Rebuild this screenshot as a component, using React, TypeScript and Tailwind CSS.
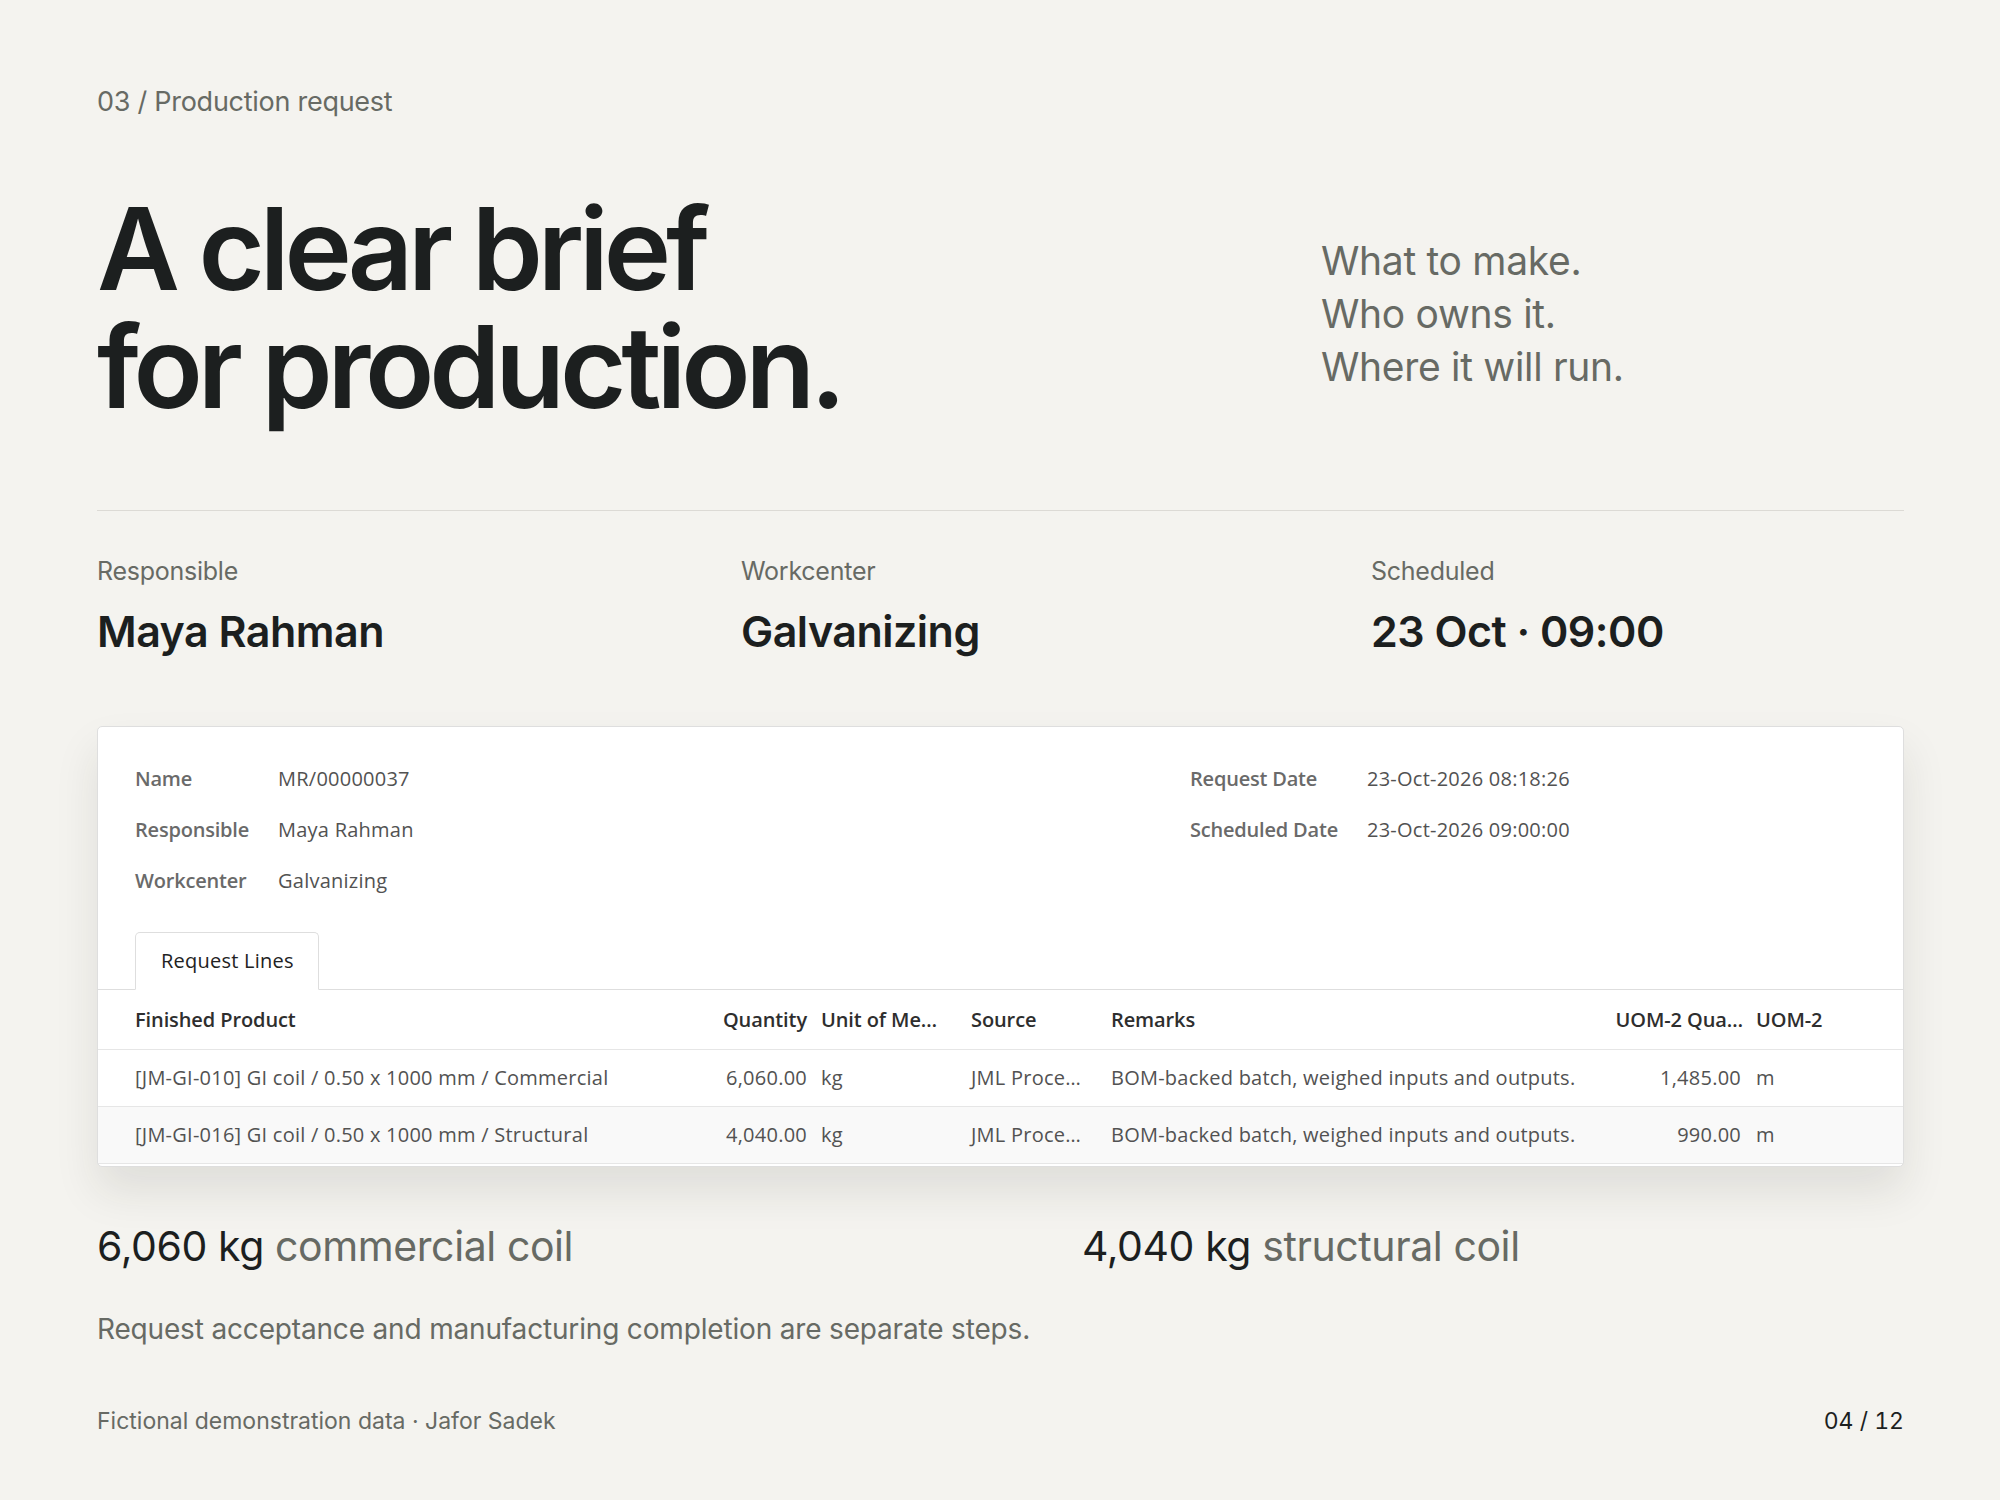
import React from "react";

const fields = [
  { label: "Name", value: "MR/00000037" },
  { label: "Responsible", value: "Maya Rahman" },
  { label: "Workcenter", value: "Galvanizing" },
];

const dates = [
  { label: "Request Date", value: "23-Oct-2026 08:18:26" },
  { label: "Scheduled Date", value: "23-Oct-2026 09:00:00" },
];

const lines = [
  {
    product: "[JM-GI-010] GI coil / 0.50 x 1000 mm / Commercial",
    qty: "6,060.00",
    uom: "kg",
    source: "JML Proce…",
    remarks: "BOM-backed batch, weighed inputs and outputs.",
    qty2: "1,485.00",
    uom2: "m",
  },
  {
    product: "[JM-GI-016] GI coil / 0.50 x 1000 mm / Structural",
    qty: "4,040.00",
    uom: "kg",
    source: "JML Proce…",
    remarks: "BOM-backed batch, weighed inputs and outputs.",
    qty2: "990.00",
    uom2: "m",
  },
];

const cols = "grid grid-cols-[616px_100px_150px_140px_500px_145px_1fr]";

export default function App() {
  return (
    <div className="w-[2000px] h-[1500px] bg-[#f4f3ef] pl-[97px] pr-[96px] pt-[84px] font-['Inter',sans-serif] text-[#1c1f1f]">
      <p className="text-[27px] leading-[36px] text-[#676a64] tracking-[-0.01em]">
        03 / Production request
      </p>

      <div className="mt-[70px] grid grid-cols-[1224px_1fr] items-center">
        <h1 className="text-[114px] leading-[118px] font-semibold tracking-[-0.045em]">
          A clear brief
          <br />
          for production.
        </h1>
        <div className="pt-[10px] text-[39px] leading-[53px] text-[#676a64] tracking-[-0.008em]">
          <p>What to make.</p>
          <p>Who owns it.</p>
          <p>Where it will run.</p>
        </div>
      </div>

      <div className="mt-[84px] border-t border-[#dcdad5]" />

      <div className="mt-[44px] grid grid-cols-[644px_630px_1fr]">
        {[
          ["Responsible", "Maya Rahman"],
          ["Workcenter", "Galvanizing"],
          ["Scheduled", "23 Oct · 09:00"],
        ].map(([label, value]) => (
          <div key={label}>
            <p className="text-[25px] leading-[32px] text-[#676a64] tracking-[-0.01em]">{label}</p>
            <p className="mt-[18px] text-[43px] leading-[52px] font-semibold tracking-[-0.012em]">
              {value}
            </p>
          </div>
        ))}
      </div>

      {/* form card */}
      <div className="mt-[69px] rounded-[5px] border border-[#dedede] bg-white pb-[2px] shadow-[0_24px_44px_rgba(40,35,25,0.10)] font-['Open_Sans',sans-serif] text-[20px] tracking-[0.012em]">
        <div className="grid grid-cols-[1055px_1fr] pl-[37px] pt-[26px]">
          <div>
            {fields.map(f => (
              <div key={f.label} className="flex h-[51px] items-center">
                <span className="w-[143px] font-semibold text-[#6a6a6a] tracking-[-0.01em]">{f.label}</span>
                <span className="text-[#525252]">{f.value}</span>
              </div>
            ))}
          </div>
          <div>
            {dates.map(f => (
              <div key={f.label} className="flex h-[51px] items-center">
                <span className="w-[177px] font-semibold text-[#6a6a6a] tracking-[-0.01em]">{f.label}</span>
                <span className="text-[#525252]">{f.value}</span>
              </div>
            ))}
          </div>
        </div>

        <div className="mt-[26px] flex border-b border-[#dedede] pl-[37px]">
          <div className="-mb-px flex h-[58px] w-[184px] items-center rounded-t-[5px] border border-b-white border-[#dedede] bg-white pl-[25px] text-[#222]">
            Request Lines
          </div>
        </div>

        <div className={`${cols} h-[60px] items-center border-b border-[#e6e6e6] font-semibold text-[#2e2e2e] tracking-[-0.005em]`}>
          <span className="pl-[37px]">Finished Product</span>
          <span className="pr-[7px] text-right">Quantity</span>
          <span className="pl-[7px]">Unit of Me…</span>
          <span className="pl-[7px]">Source</span>
          <span className="pl-[7px]">Remarks</span>
          <span className="pr-[6px] text-right">UOM-2 Qua…</span>
          <span className="pl-[7px]">UOM-2</span>
        </div>

        {lines.map((l, i) => (
          <div
            key={l.product}
            className={`${cols} h-[57px] items-center border-b border-[#e6e6e6] text-[#525252] ${
              i % 2 === 1 ? "bg-[#f9f9f9]" : ""
            }`}
          >
            <span className="pl-[37px]">{l.product}</span>
            <span className="pr-[7px] text-right">{l.qty}</span>
            <span className="pl-[7px]">{l.uom}</span>
            <span className="pl-[7px]">{l.source}</span>
            <span className="pl-[7px]">{l.remarks}</span>
            <span className="pr-[8px] text-right">{l.qty2}</span>
            <span className="pl-[7px]">{l.uom2}</span>
          </div>
        ))}
      </div>

      <div className="mt-[55px] grid grid-cols-[985px_1fr] text-[41px] leading-[48px] tracking-[-0.01em]">
        <p>
          6,060 kg <span className="text-[#676a64]">commercial coil</span>
        </p>
        <p>
          4,040 kg <span className="text-[#676a64]">structural coil</span>
        </p>
      </div>

      <p className="mt-[42px] text-[28px] leading-[34px] text-[#676a64] tracking-[-0.006em]">
        Request acceptance and manufacturing completion are separate steps.
      </p>

      <div className="mt-[61px] flex items-center justify-between text-[23px] leading-[28px]">
        <p className="text-[#676a64]">Fictional demonstration data · Jafor Sadek</p>
        <p className="tabular-nums">04 / 12</p>
      </div>
    </div>
  );
}
